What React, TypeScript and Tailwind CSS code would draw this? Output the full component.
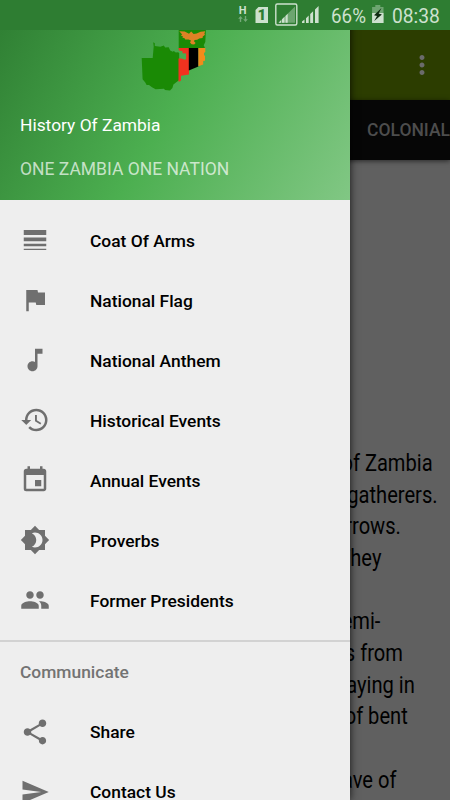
import type { IconType } from "react-icons";
import {
    MdBrightness4,
    MdEvent,
    MdFlag,
    MdHistory,
    MdLineWeight,
    MdMoreVert,
    MdMusicNote,
    MdPeople,
    MdSend,
    MdShare,
} from "react-icons/md";

interface MenuItem {
    label: string;
    icon: IconType;
}

const mainItems: MenuItem[] = [
    { label: "Coat Of Arms", icon: MdLineWeight },
    { label: "National Flag", icon: MdFlag },
    { label: "National Anthem", icon: MdMusicNote },
    { label: "Historical Events", icon: MdHistory },
    { label: "Annual Events", icon: MdEvent },
    { label: "Proverbs", icon: MdBrightness4 },
    { label: "Former Presidents", icon: MdPeople },
];

const communicateItems: MenuItem[] = [
    { label: "Share", icon: MdShare },
    { label: "Contact Us", icon: MdSend },
];

// end is the free space to the right of each line
const articleLines = [
    { text: "of Zambia", end: 17 },
    { text: "gatherers.", end: 12 },
    { text: "arrows.", end: 49 },
    { text: "They", end: 69 },
    { text: "", end: 0 },
    { text: "semi-", end: 70 },
    { text: "s from", end: 47 },
    { text: "laying in", end: 35 },
    { text: "of bent", end: 42 },
    { text: "", end: 0 },
    { text: "wave of", end: 54 },
];

function StatusBar() {
    return (
        <div className="relative z-20 flex h-[30px] shrink-0 bg-[#2e7d32] text-[#cde1ce]">
            <svg className="ml-[235px] h-[30px] w-[90px]" viewBox="235 0 90 30" fill="currentColor">
                <text x="238.8" y="14" fontSize="11" fontWeight="700" fontFamily="Roboto, sans-serif">H</text>
                <g opacity=".45">
                    <path d="M240.5 16l2.3 2.8h-1.6V22h-1.4v-3.2h-1.6zM245.5 22l-2.3-2.8h1.6V16h1.4v3.2h1.6z" />
                </g>
                <path d="M258.5 7H268v16h-12.5V10z" />
                <text x="257.4" y="20.3" fontSize="15" fontWeight="900" fill="#2e7d32" fontFamily="Roboto, sans-serif">1</text>
                <rect x="275.8" y="4" width="21" height="21" rx="1.5" fill="none" stroke="currentColor" strokeWidth="1.4" />
                <path d="M278.5 22.8L295 6.5v16.3z" opacity=".4" />
                <path d="M278.5 22.8l2.5-2.5v2.5zM282 19.2l2.5-2.5v6.1H282zM285.5 16l2.2-2.2v9h-2.2z" />
                <path d="M302 23v-1.5l2.5-2v3.5zM306 18.2l2.7-2.6V23H306zM310.2 14l2.9-2.8V23h-2.9zM315 9.5l3.6-3.4V23H315z" />
            </svg>
            <span className="ml-[6px] w-[36px] text-[20px] leading-[33px] whitespace-nowrap">
                <span className="inline-block origin-left scale-x-[.94]">66%</span>
            </span>
            <svg className="ml-[4px] h-[30px] w-[14px]" viewBox="371 0 14 30" fill="currentColor">
                <path d="M375.3 5h5v2h3.2v16h-11.4V7h3.2z" opacity=".4" />
                <path d="M372.1 13h11.4v10h-11.4z" />
                <path d="M381.5 8l-7.5 7.2 3 .7-2.8 5 7.7-6.3-3.2-1z" fill="#102c12" />
            </svg>
            <span className="ml-[7px] text-[20px] leading-[33px] whitespace-nowrap">
                <span className="inline-block origin-left scale-x-[.96]">08:38</span>
            </span>
        </div>
    );
}

function ZambiaMap() {
    return (
        <svg className="ml-[140px] h-[64px] w-[68px]" viewBox="140 30 68 64">
            <path
                fill="#1a8a05"
                d="M141.7 58h11l1-11.5-.5-4.2 1.6 1v2.6l5.5.9 3.6-1.2 1.2 2 3.6-.3 1.5 3.2 2.6 1.2 1-.6 2 1.4 2.2-.2 1.2.8v27l-5.8 4.3-1 3.6-2.4 2.4-5-.4-1-1.3-8.4.6-3.6-2-3-2.2h-2.4l-1.3-2.5-2.7-3.3z"
            />
            <path fill="#1a8a05" d="M178.7 30h27.2l-.6 12-1.6 3.2 1.4 3h-26.4z" />
            <path
                fill="#f1321f"
                d="M178.5 48H189v26.6l-8 1.2v4.6l-1.5 1h-1V58.5l3 .1 3.4 1.2 1.2-.8v-5.6l-3.6-.2v-2l-3.6-.6z"
            />
            <path fill="#000" d="M188.8 48h9.6v18.5l-6 2.6-3.6 1.4z" />
            <path fill="#f28b1b" d="M198.4 48h6.9v4l-1.3 1v2.6h1v5.2l-1.8.2v3.4l-4.8 1.8z" />
            <path
                fill="#dd8225"
                d="M179.3 31.2l5.4.3 4.3 2.3 2.2-2.2 2.4 2.4 3-.4 4-1.8 4.6-.6-.8 2.6.6 1-2.2 1.8-.2 1.4-3.4.4-2 1.4-2.6.2-.6 1.2 1.6 1.8-1.4 1.6-2.6-.4-1.6-1.6 1-2-2.4-1-3.4-.2-.6-1.2-2.4-.6 1-.8-2.4-1.6 1.4-.8z"
            />
        </svg>
    );
}

function DrawerItem({ label, icon: Icon }: MenuItem) {
    return (
        <li className="flex h-[60px] items-center px-5">
            <Icon className="size-[30px] shrink-0 text-[#6f6f6f]" />
            <span className="ml-10 text-[17.4px] leading-[16px] font-medium text-black">{label}</span>
        </li>
    );
}

function Drawer() {
    return (
        <aside className="absolute inset-y-0 left-0 z-10 w-[350px] overflow-hidden bg-[#eee] shadow-[0_0_8px_rgba(0,0,0,0.8)]">
            <div className="h-[200px] bg-[linear-gradient(119.74deg,#2e7d32,#4caf50_50%,#81c784)] pt-[30px]">
                <ZambiaMap />
                <p className="mt-[18px] ml-5 text-[17.4px] leading-[26px] text-white">History Of Zambia</p>
                <p className="mt-[18px] ml-5 text-[17.5px] leading-[26px] text-white/70">ONE ZAMBIA ONE NATION</p>
            </div>
            <ul className="h-[442px] border-b-2 border-[#d2d2d2] pt-[10px] [&_span]:pt-px">
                {mainItems.map((item) => (
                    <DrawerItem key={item.label} {...item} />
                ))}
            </ul>
            <h2 className="flex h-[60px] items-center px-5 pt-px text-[17.4px] font-medium text-[#737373]">Communicate</h2>
            <ul>
                {communicateItems.map((item) => (
                    <DrawerItem key={item.label} {...item} />
                ))}
            </ul>
        </aside>
    );
}

function App() {
    return (
        <div className="relative flex h-[800px] w-[450px] flex-col overflow-hidden bg-[#606060] font-[Roboto,sans-serif]">
            <StatusBar />
            <header className="flex h-[70px] shrink-0 items-center justify-end bg-[#2c3d00] pr-[13px]">
                <MdMoreVert className="size-[30px] text-[#6b6b6b]" />
            </header>
            <nav className="z-0 flex h-[60px] shrink-0 items-center bg-[#060606] pt-px pl-[367px] shadow-[0_1px_5px_rgba(0,0,0,0.6)]">
                <span className="text-[17.5px] font-medium text-[#4d4d4d]">COLONIAL</span>
            </nav>
            <main className="mt-[288px] text-[23.5px] text-black">
                {articleLines.map((line, i) => (
                    <p
                        key={i}
                        className="h-[31.67px] text-right leading-[31.67px] whitespace-nowrap"
                        style={{ paddingRight: line.end }}
                    >
                        <span className="inline-block origin-right scale-x-[.855]">{line.text}</span>
                    </p>
                ))}
            </main>
            <Drawer />
        </div>
    );
}

export default App;
